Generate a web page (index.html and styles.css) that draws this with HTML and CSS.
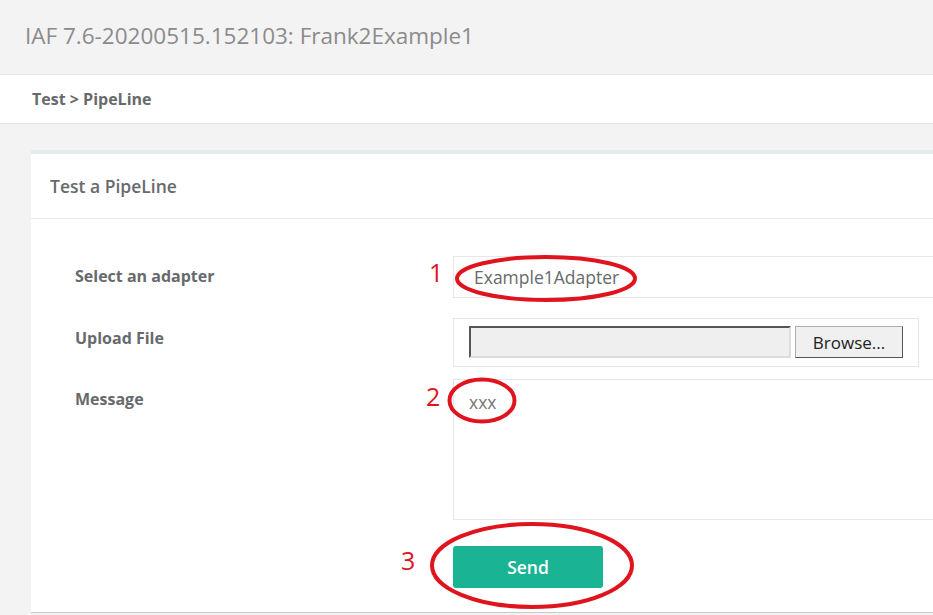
FILE: index.html
```html
<!DOCTYPE html>
<html>
<head>
<meta charset="utf-8">
<title>Test a PipeLine</title>
<link rel="stylesheet" href="styles.css">
</head>
<body>
<header class="topbar">IAF 7.6-20200515.152103: Frank2Example1</header>
<nav class="crumbs">Test &gt; PipeLine</nav>
<main class="content">
  <section class="card">
    <div class="card-head">Test a PipeLine</div>
    <div class="card-body">
      <div class="row row-select">
        <div class="label">Select an adapter</div>
        <div class="field"><div class="select">Example1Adapter</div></div>
      </div>
      <div class="row row-upload">
        <div class="label">Upload File</div>
        <div class="field">
          <div class="upload">
            <div class="file-box"></div>
            <div class="browse">Browse...</div>
          </div>
        </div>
      </div>
      <div class="row row-message">
        <div class="label">Message</div>
        <div class="field"><div class="textarea">xxx</div></div>
      </div>
      <div class="row row-send">
        <div class="label"></div>
        <div class="field"><button class="send">Send</button></div>
      </div>
    </div>
  </section>
</main>
<svg class="marks" width="933" height="615" viewBox="0 0 933 615">
  <ellipse cx="546" cy="278.5" rx="89" ry="21.5" />
  <ellipse cx="482" cy="400.5" rx="32.5" ry="21" />
  <ellipse cx="532" cy="565.5" rx="100" ry="41.5" />
  <text x="429" y="282">1</text>
  <text x="426" y="406">2</text>
  <text x="401" y="570">3</text>
</svg>
</body>
</html>
```
FILE: styles.css
```css
html, body {
  margin: 0;
  padding: 0;
}
body {
  width: 933px;
  height: 615px;
  overflow: hidden;
  background: #f3f3f4;
  font-family: "Open Sans", "Noto Sans", sans-serif;
  color: #676a6c;
  position: relative;
}
.topbar {
  height: 75px;
  border-bottom: 1px solid #e4e4e6;
  padding-left: 25px;
  padding-bottom: 4px;
  box-sizing: border-box;
  display: flex;
  align-items: center;
  font-size: 22.5px;
  color: #8b8b8b;
}
.crumbs {
  height: 49px;
  box-sizing: border-box;
  background: #fff;
  border-bottom: 1px solid #e4e4e6;
  padding-left: 32px;
  display: flex;
  align-items: center;
  font-size: 16px;
  font-weight: 700;
  color: #676a6c;
}
.content {
  padding: 26px 0 0 31px;
}
.card {
  width: 1000px;
  background: #fff;
  border-top: 4px solid #e7eaec;
  border-bottom: 1px solid #c9c9c9;
}
.card-head {
  height: 65px;
  border-bottom: 1px solid #e7eaec;
  box-sizing: border-box;
  padding-left: 19px;
  display: flex;
  align-items: center;
  font-size: 17.5px;
  font-weight: 600;
  color: #676a6c;
}
.card-body {
  padding: 37px 0 24px 44px;
}
.row {
  display: grid;
  grid-template-columns: 378px 1fr;
}
.label {
  font-size: 16px;
  font-weight: 700;
  line-height: 20px;
  padding-top: 10px;
  color: #676a6c;
}
.row-select { margin-bottom: 20px; }
.row-upload { margin-bottom: 12px; }
.row-message { margin-bottom: 26px; }
.select {
  height: 42px;
  box-sizing: border-box;
  border: 1px solid #e5e6e7;
  padding-left: 20px;
  display: flex;
  align-items: center;
  font-size: 17.5px;
  color: #676a6c;
}
.upload {
  width: 466px;
  height: 49px;
  box-sizing: border-box;
  border: 1px solid #e5e6e7;
  padding: 7px 0 0 15px;
  display: flex;
  gap: 4px;
}
.file-box {
  width: 322px;
  height: 32px;
  box-sizing: border-box;
  background: #efefef;
  border-top: 2px solid #555;
  border-left: 2px solid #555;
  border-right: 2px solid #dcdcdc;
  border-bottom: 2px solid #dcdcdc;
}
.browse {
  width: 108px;
  height: 32px;
  box-sizing: border-box;
  background: #f0f0f0;
  border: 1px solid #adadad;
  border-right-color: #555;
  border-bottom-color: #555;
  display: flex;
  align-items: center;
  justify-content: center;
  font-size: 17px;
  color: #222;
}
.textarea {
  height: 141px;
  box-sizing: border-box;
  border: 1px solid #e5e6e7;
  padding: 10px 0 0 15px;
  font-size: 17.5px;
  color: #777;
}
.send {
  width: 150px;
  height: 42px;
  border: 0;
  border-radius: 3px;
  background: #1ab394;
  color: #fff;
  font-family: "Open Sans", "Noto Sans", sans-serif;
  font-size: 17.5px;
  font-weight: 600;
  padding: 0;
}
.marks {
  position: absolute;
  left: 0;
  top: 0;
  pointer-events: none;
}
.marks ellipse {
  fill: none;
  stroke: #e0141e;
  stroke-width: 4;
}
.marks text {
  fill: #e0141e;
  font-family: "Open Sans", "Noto Sans", sans-serif;
  font-size: 25px;
}
```
